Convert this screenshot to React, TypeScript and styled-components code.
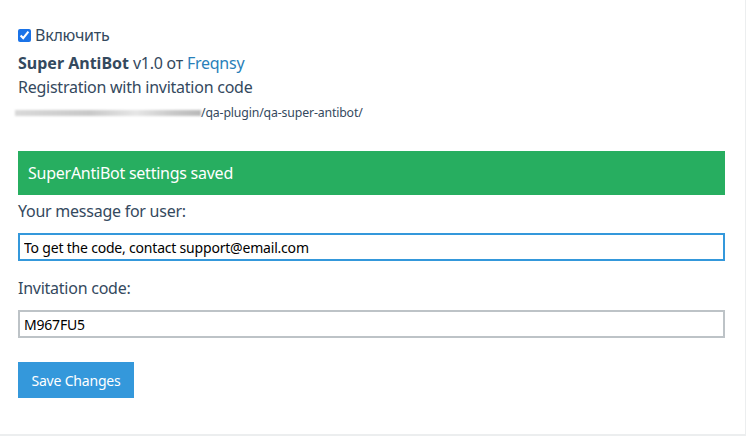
import React, { useEffect, useRef } from "react";
import styled, { createGlobalStyle } from "styled-components";

const Global = createGlobalStyle`
  html, body { margin: 0; padding: 0; background: #eceeef; }
  body { font-family: "Noto Sans", "Open Sans", sans-serif; letter-spacing: -0.25px; }
`;

const Page = styled.div`
  width: 745px;
  height: 434px;
  background: #ffffff;
  box-sizing: border-box;
  padding: 23px 20px 0 18px;
  display: flex;
  flex-direction: column;
  color: #34495e;
`;

const Line = styled.div<{ $size?: number; $h?: number; $top?: number }>`
  font-size: ${(p) => p.$size ?? 16}px;
  line-height: ${(p) => p.$h ?? 24}px;
  margin-top: ${(p) => p.$top ?? 0}px;
  display: flex;
  align-items: center;
`;

const Check = styled.input`
  width: 13px;
  height: 13px;
  margin: 0 4px 0 0;
  accent-color: #1a73e8;
`;

const Bold = styled.b`
  font-weight: 700;
  letter-spacing: 0;
  margin-right: 4px;
`;

const Link = styled.a`
  color: #2980b9;
  text-decoration: none;
  margin-left: 4px;
`;

const Blur = styled.span`
  display: inline-block;
  width: 186px;
  height: 6px;
  margin-left: -3px;
  background: linear-gradient(90deg, #d9d9d9, #c8c8c8 40%, #e6e6e6 65%, #c8c8c8 85%, #b9b9b9);
  filter: blur(1px);
`;

const Path = styled.span`
  color: #34495e;
  font-size: 12.3px;
  letter-spacing: -0.15px;
`;

const Alert = styled.div`
  margin-top: 24px;
  height: 44px;
  background: #27ae60;
  color: #ffffff;
  font-size: 16px;
  display: flex;
  align-items: center;
  padding-left: 10px;
`;

const Label = styled.div<{ $top: number }>`
  font-size: 16px;
  line-height: 24px;
  margin-top: ${(p) => p.$top}px;
`;

const Field = styled.input<{ $focus?: boolean }>`
  box-sizing: border-box;
  width: 100%;
  height: 28px;
  margin-top: 10px;
  border: 2px solid ${(p) => (p.$focus ? "#3498db" : "#bdc3c7")};
  border-radius: 0;
  padding: 0 4px;
  font-family: "Noto Sans", "Open Sans", sans-serif;
  font-size: 14px;
  letter-spacing: -0.2px;
  color: #000000;
  caret-color: #000000;
  outline: none;
`;

const Button = styled.button`
  align-self: flex-start;
  margin-top: 24px;
  width: 116px;
  height: 36px;
  background: #3498db;
  color: #ffffff;
  border: none;
  border-radius: 0;
  font-family: "Noto Sans", "Open Sans", sans-serif;
  font-size: 14px;
  letter-spacing: -0.2px;
  padding: 0;
`;

export default function App() {
  const msgRef = useRef<HTMLInputElement>(null);
  useEffect(() => {
    const el = msgRef.current;
    if (el) {
      el.focus();
      const n = el.value.length;
      el.setSelectionRange(n, n);
    }
  }, []);
  return (
    <>
      <Global />
      <Page>
        <Line>
          <Check type="checkbox" defaultChecked />
          Включить
        </Line>
        <Line $top={4}>
          <Bold>Super AntiBot</Bold> v1.0 от <Link href="#">Freqnsy</Link>
        </Line>
        <Line>Registration with invitation code</Line>
        <Line $size={12} $h={28}>
          <Blur />
          <Path>/qa-plugin/qa-super-antibot/</Path>
        </Line>
        <Alert>SuperAntiBot settings saved</Alert>
        <Label $top={4}>Your message for user:</Label>
        <Field ref={msgRef} $focus defaultValue="To get the code, contact support@email.com" />
        <Label $top={15}>Invitation code:</Label>
        <Field defaultValue="M967FU5" />
        <Button>Save Changes</Button>
      </Page>
    </>
  );
}
